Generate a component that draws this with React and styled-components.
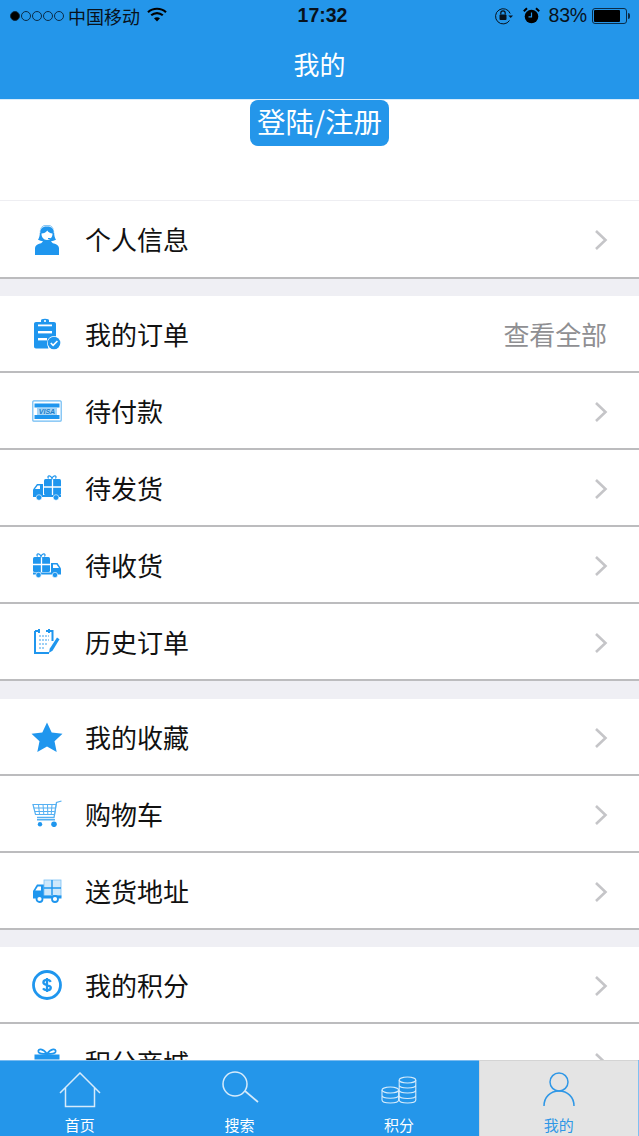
import React from "react";
import styled, { createGlobalStyle } from "styled-components";

const BLUE = "#2496ea";
const ICON = "#1f96ee";

const Global = createGlobalStyle`
  html, body { margin: 0; padding: 0; background: #fff; }
  * { box-sizing: border-box; }
  body { font-family: "Liberation Sans", "Noto Sans CJK SC", sans-serif; }
`;

const Page = styled.div`
  width: 639px; height: 1136px; display: flex; flex-direction: column; overflow: hidden; background: #fff;
`;
const Header = styled.header`
  height: 100px; flex: none; background: ${BLUE}; border-bottom: 1px solid #d8ecfb;
`;
const StatusBar = styled.div`
  height: 31px; display: flex; align-items: center; padding: 0 9px 0 10px; color: #08121c; position: relative;
`;
const Dots = styled.div`
  display: flex; align-items: center; gap: 1px; margin-right: 4px;
`;
const Dot = styled.span`
  width: 10px; height: 10px; border-radius: 50%; border: 1px solid #0a2c48;
  background: ${p => (p.$on ? "#000" : "transparent")};
`;
const Carrier = styled.span`
  font: 18px/1 "Noto Sans CJK SC", sans-serif;
`;
const Time = styled.span`
  position: absolute; left: 6px; right: 0; text-align: center; font: 700 19.5px/31px "Liberation Sans", sans-serif;
`;
const StatusRight = styled.div`
  margin-left: auto; display: flex; align-items: center;
`;
const Percent = styled.span`
  font: 19.5px/1 "Liberation Sans", sans-serif; margin: 0 5px 0 9px; letter-spacing: -.2px;
`;
const Battery = styled.div`
  width: 35px; height: 16px; border: 1px solid #0a2c48; border-radius: 3px; padding: 1px; display: flex;
`;
const BatteryFill = styled.div`
  background: #000; border-radius: 1px; height: 100%;
`;
const BatteryTip = styled.div`
  width: 2px; height: 6px; background: #0a2c48; border-radius: 0 2px 2px 0; margin-left: 1px;
`;
const Spacer = styled.span`
  width: 9px;
`;
const Title = styled.h1`
  margin: 0; height: 67px; display: flex; align-items: center; justify-content: center; padding-bottom: 2px;
  font: 400 26px/1 "Noto Sans CJK SC", sans-serif; color: #fff;
`;
const Hero = styled.section`
  height: 101px; flex: none; display: flex; justify-content: center; align-items: flex-start; background: #fff;
  border-bottom: 1px solid #eeeef2;
`;
const LoginButton = styled.button`
  width: 139px; height: 46px; margin: 0; padding: 0 0 3px; border: 0; border-radius: 8px; background: ${BLUE}; color: #fff;
  font: 400 28.5px/1 "Noto Sans CJK SC", sans-serif; white-space: nowrap;
`;
const Scroll = styled.main`
  flex: 1; min-height: 0; overflow: hidden; background: #efeff4;
`;
const Group = styled.section`
  margin-top: ${p => p.$gap}px;
`;
const Row = styled.div`
  height: ${p => p.$h}px; display: flex; align-items: center; padding: 0 31px 0 29px; background: #fff;
  border-bottom: 2px solid #bcbcbe;
`;
const IconBox = styled.div`
  width: 36px; height: 36px; flex: none; display: flex; align-items: center; justify-content: center;
  svg { display: block; }
`;
const Label = styled.span`
  margin-left: 20px; font: 400 26px/1 "Noto Sans CJK SC", sans-serif; color: #111;
`;
const Right = styled.span`
  margin-left: auto; margin-right: 1px; font: 400 26px/1 "Noto Sans CJK SC", sans-serif; color: #8f8f92; letter-spacing: -.1px;
`;
const Chevron = styled.svg`
  margin: 2px 0 0 auto; display: block;
`;
const TabBar = styled.nav`
  height: 76px; flex: none; display: grid; grid-template-columns: 159.5px 160px 159px 159.5px 1px; background: ${BLUE};
  border-top: 1px solid #79bbf0;
`;
const Tab = styled.div`
  display: flex; flex-direction: column; align-items: center; color: ${p => (p.$active ? "#2f97e6" : "#fff")};
  background: ${p => (p.$active ? "#e4e4e4" : "transparent")};
  border-left: ${p => (p.$active ? "1px solid #d4d4d4" : "0")};
  ${p => p.$active && "border-top: 1px solid #d4d4d4; margin-top: -1px;"}
`;
const TabIcon = styled.div`
  height: 50px; flex: none; display: flex; align-items: flex-end; padding-bottom: ${p => p.$lift}px;
`;
const TabText = styled.span`
  font: 400 15px/1 "Noto Sans CJK SC", sans-serif; margin-top: 6px;
`;
const TabEdge = styled.div`
  background: #7fc0f2;
`;

const Wifi = () => (
  <svg width="20" height="15" viewBox="0 0 20 15" style={{ marginLeft: 7, marginBottom: 2 }}>
    <path d="M1 5.2C6 .6 14 .6 19 5.2" fill="none" stroke="#000" strokeWidth="2.2" />
    <path d="M4.200 8.300c3.400-3 8.200-3 11.600 0" fill="none" stroke="#000" strokeWidth="2.2" />
    <path d="M7 11.200c1.800-1.400 4.200-1.400 6 0L10 14.400z" fill="#000" />
  </svg>
);
const RotationLock = () => (
  <svg width="19" height="18" viewBox="0 0 19 18">
    <path d="M14.500 13.500A7.600 7.600 0 1 1 15.200 6.500" fill="none" stroke="#08121c" strokeWidth="1" />
    <path d="M13.300 8.500h4.700l-2.300 2.600z" fill="#08121c" />
    <rect x="4.500" y="7.500" width="7" height="5.500" rx="1" fill="#08121c" />
    <path d="M5.800 7.500V6a2.200 2.200 0 0 1 4.400 0v1.500" fill="none" stroke="#08121c" strokeWidth="1.200" />
  </svg>
);
const Alarm = () => (
  <svg width="17" height="17" viewBox="0 0 17 17">
    <circle cx="8.500" cy="9.500" r="6.800" fill="#000" />
    <path d="M.8 4.200 4 1.200M16.200 4.200 13 1.200" stroke="#000" strokeWidth="2" />
    <path d="M8.500 5.500v4.300H5.500" fill="none" stroke="#2496ea" strokeWidth="1.200" />
  </svg>
);
const Arrow = () => (
  <Chevron width="14" height="22" viewBox="0 0 14 22">
    <path d="M2 2l9.500 9L2 20" fill="none" stroke="#c5c5c8" strokeWidth="2.6" />
  </Chevron>
);

const Person = () => (
  <svg width="26" height="32" viewBox="0 -1 26 32">
    <path d="M13 1C8 1 5.600 4.500 5.800 8.500c.1 3-.6 5.500-1.800 7.200 1.800.9 3.300 1.200 4.800 1.200-.4 1.400-1 2-2.800 2.600C3 20.500 1.200 21.500 1 24v7h24V24c-.2-2.500-2-3.500-5-4.500-1.800-.6-2.400-1.200-2.800-2.600 1.500 0 3-.3 4.800-1.200-1.200-1.700-1.900-4.200-1.800-7.200C20.400 4.500 18 1 13 1z" fill={ICON} />
    <path d="M7.500 9.500c2.500 0 4.500-1 5.800-3 1 1.800 2.800 2.800 5.200 3 .2 3.500-2 6.500-5.500 6.500s-5.700-3-5.500-6.500z" fill="#fff" />
    <path d="M5.800 9V7.500C6 4 9 2 13 2s7 2 7.200 5.500V9" fill="none" stroke="#fff" strokeWidth=".9" />
    <path d="M14 14.500h2.500c1.500 0 2.500-1 2.800-3" fill="none" stroke={ICON} strokeWidth="1" />
  </svg>
);
const Clipboard = () => (
  <svg width="28" height="32" viewBox="0 0 28 32">
    <path d="M3 4h5V2.500C8 1.500 9 .8 12 .8s4 .7 4 1.700V4h5c1.200 0 2 .8 2 2v13.500a8 8 0 0 0-7.500 11H3c-1.200 0-2-.8-2-2V6c0-1.200.8-2 2-2z" fill={ICON} />
    <circle cx="12" cy="3" r="1.100" fill="#fff" />
    <rect x="5" y="6.500" width="14" height="1.800" fill="#fff" />
    <rect x="5" y="13" width="14" height="2.400" fill="#fff" />
    <rect x="5" y="20" width="9" height="2.400" fill="#fff" />
    <circle cx="21" cy="25" r="7" fill="#fff" />
    <circle cx="21" cy="25" r="6.300" fill={ICON} />
    <path d="M17.800 25l2.300 2.300 4.300-4.300" fill="none" stroke="#fff" strokeWidth="1.600" />
  </svg>
);
const Card = () => (
  <svg width="30" height="22" viewBox="0 0 30 22">
    <rect x=".8" y=".8" width="28.400" height="20.400" rx="1" fill="#fff" stroke="#6dbbf3" strokeWidth="1.200" />
    <rect x="2.500" y="3.500" width="25" height="4" fill={ICON} />
    <rect x="2.500" y="15" width="25" height="4" fill={ICON} />
    <rect x="5" y="8" width="20" height="7" fill="#a6d6f8" />
    <text x="15" y="14.300" textAnchor="middle" fontFamily="Liberation Sans" fontSize="7" fontStyle="italic" fontWeight="700" fill="#1a7dc8">VISA</text>
  </svg>
);
const TruckRight = () => (
  <svg width="30" height="26" viewBox="0 0 30 26">
    <path d="M1 14.500L5 9h6v13H1z" fill={ICON} />
    <path d="M3 14l2.700-3.500H8V14z" fill="#fff" />
    <rect x="12" y="4" width="17" height="16" rx="1.500" fill={ICON} />
    <path d="M20.500 4v16M12 12h17" stroke="#fff" strokeWidth="1.300" />
    <path d="M16.500 3.500c-2-3 2-4 3.500 0 1.500-4 5.500-3 3.500 0" fill="none" stroke={ICON} strokeWidth="1.200" />
    <rect x="1" y="20" width="28" height="2" fill={ICON} />
    <circle cx="7" cy="22.500" r="2.800" fill={ICON} stroke="#fff" strokeWidth=".6" />
    <circle cx="24" cy="22.500" r="2.800" fill={ICON} stroke="#fff" strokeWidth=".6" />
  </svg>
);
const TruckLeft = () => (
  <svg width="30" height="26" viewBox="0 0 30 26">
    <path d="M29 16.500L25.500 11H19v10h10z" fill={ICON} />
    <path d="M27 16l-2.500-3.500H21V16z" fill="#fff" />
    <rect x="1" y="5" width="17" height="15" rx="1.500" fill={ICON} />
    <path d="M9.500 5v15M1 12.500h17" stroke="#fff" strokeWidth="1.300" />
    <path d="M5.500 4.500c-2-3 2-4 3.500 0 1.500-4 5.500-3 3.500 0" fill="none" stroke={ICON} strokeWidth="1.200" />
    <rect x="1" y="20.500" width="28" height="2" fill={ICON} />
    <circle cx="6.500" cy="23" r="2.700" fill={ICON} stroke="#fff" strokeWidth=".6" />
    <circle cx="23" cy="23" r="2.700" fill={ICON} stroke="#fff" strokeWidth=".6" />
  </svg>
);
const Notes = () => (
  <svg width="26" height="26" viewBox="0 0 26 26" style={{ overflow: "visible" }}>
    <path d="M1 2h4M12 2h6.500v10M1 2v22h14" fill="none" stroke={ICON} strokeWidth="2" />
    <rect x="4" y="0" width="2" height="4" fill={ICON} />
    <rect x="14" y="0" width="2" height="4" fill={ICON} />
    <path d="M5 7h10M5 11h10M5 15h8M5 19h6" stroke="#7cc1f4" strokeWidth="1.300" strokeDasharray="2 1" />
    <path d="M23 8.500l2.500 1.800-7 11.500-3.500 2 .7-4z" fill={ICON} />
  </svg>
);
const Star = () => (
  <svg width="32" height="30" viewBox="0 0 32 30">
    <path d="M16 .5l4.700 10 10.800 1.300-8 7.400 2.200 10.800L16 24.600 6.300 30l2.200-10.800-8-7.400 10.800-1.300z" fill={ICON} />
  </svg>
);
const Cart = () => (
  <svg width="30" height="27" viewBox="0 0 30 27">
    <path d="M29.500 1L24.500 2.500 22 17.500H5" fill="none" stroke="#55b0f2" strokeWidth="1.300" />
    <path d="M1 4.500h23l-1.500 10H3.500z" fill="#fff" stroke="#55b0f2" strokeWidth="1.200" />
    <path d="M6.500 4.500l1 10M11 4.500l.8 10M15.500 4.500l.3 10M20 4.500l-.8 10M1.800 8h21.500M2.800 11.500h20" stroke="#55b0f2" strokeWidth="1" />
    <rect x="5" y="19" width="18" height="1.500" fill="#55b0f2" />
    <circle cx="8" cy="24.300" r="2.200" fill={ICON} />
    <circle cx="22" cy="24.300" r="2.800" fill={ICON} />
  </svg>
);
const DeliveryTruck = () => (
  <svg width="30" height="24" viewBox="0 0 30 24">
    <path d="M1 12l4-6.500h7V18H1z" fill={ICON} />
    <path d="M3.300 11.500l2.600-4H9v4z" fill="#fff" />
    <rect x="12" y="1" width="17" height="16" fill="#cfe8fb" stroke="#7cc1f4" strokeWidth=".8" />
    <path d="M20 1v15M12 9h17" stroke={ICON} strokeWidth="1.400" />
    <rect x="1" y="16.500" width="28.500" height="3" fill={ICON} />
    <circle cx="7.500" cy="20" r="3" fill="#fff" stroke={ICON} strokeWidth="1.800" />
    <circle cx="23" cy="20" r="3" fill="#fff" stroke={ICON} strokeWidth="1.800" />
  </svg>
);
const Coin = () => (
  <svg width="30" height="30" viewBox="0 0 30 30">
    <circle cx="15" cy="15" r="13.500" fill="none" stroke={ICON} strokeWidth="2.800" />
    <path d="M18.800 11.800c-.7-1.200-2-1.900-3.800-1.900-2.200 0-3.600 1-3.600 2.500 0 3.500 7.400 1.800 7.400 5.300 0 1.600-1.500 2.500-3.800 2.500-1.900 0-3.200-.6-4-1.800M15 8v14" fill="none" stroke={ICON} strokeWidth="2.300" />
  </svg>
);
const Gift = () => (
  <svg width="26" height="30" viewBox="0 0 26 30">
    <path d="M13 7C9 1 3.500 1.500 4.500 5 5.200 7 9 7 13 7c4 0 7.800 0 8.500-2C22.500 1.500 17 1 13 7z" fill="none" stroke={ICON} strokeWidth="1.800" />
    <rect x="0.500" y="7.500" width="25" height="5" fill={ICON} />
    <rect x="2" y="13.500" width="22" height="14" fill={ICON} />
  </svg>
);

const STROKE = "#d6ebfb";
const HomeIcon = () => (
  <svg width="42" height="36" viewBox="0 0 42 36">
    <path d="M1 21L21 1l20 20M6.500 16v18.500h29V16" fill="none" stroke={STROKE} strokeWidth="1.500" />
  </svg>
);
const SearchIcon = () => (
  <svg width="38" height="34" viewBox="0 0 38 34">
    <circle cx="14" cy="13" r="12" fill="none" stroke={STROKE} strokeWidth="1.500" />
    <path d="M24 20l13 11" stroke={STROKE} strokeWidth="1.700" />
  </svg>
);
const CoinsIcon = () => (
  <svg width="36" height="28" viewBox="0 0 36 28">
    <g fill="none" stroke={STROKE} strokeWidth="1.100">
      <ellipse cx="26.500" cy="4" rx="8.300" ry="3" />
      <path d="M18.200 4v20c0 1.700 3.700 3 8.300 3s8.300-1.300 8.300-3V4M18.200 9c0 1.700 3.700 3 8.300 3s8.300-1.300 8.300-3M18.200 14c0 1.700 3.700 3 8.300 3s8.300-1.300 8.300-3M18.200 19.500c0 1.700 3.700 3 8.300 3s8.300-1.300 8.300-3" />
      <ellipse cx="9.300" cy="14" rx="8.300" ry="3" />
      <path d="M1 14v10c0 1.700 3.700 3 8.300 3s8.300-1.300 8.300-3V14M1 19.200c0 1.700 3.700 3 8.300 3s8.300-1.300 8.300-3" />
    </g>
  </svg>
);
const UserIcon = () => (
  <svg width="32" height="34" viewBox="0 0 32 34">
    <circle cx="16" cy="10" r="9" fill="none" stroke="#2f97e6" strokeWidth="1.500" />
    <path d="M1 34c0-9 6.500-15 15-15s15 6 15 15" fill="none" stroke="#2f97e6" strokeWidth="1.500" />
  </svg>
);

const groups = [
  {
    gap: 0,
    h: 78,
    rows: [{ icon: <Person />, label: "个人信息" }],
  },
  {
    gap: 17,
    h: 77,
    rows: [
      { icon: <Clipboard />, label: "我的订单", right: "查看全部" },
      { icon: <Card />, label: "待付款" },
      { icon: <TruckRight />, label: "待发货" },
      { icon: <TruckLeft />, label: "待收货" },
      { icon: <Notes />, label: "历史订单" },
    ],
  },
  {
    gap: 18,
    h: 77,
    rows: [
      { icon: <Star />, label: "我的收藏" },
      { icon: <Cart />, label: "购物车" },
      { icon: <DeliveryTruck />, label: "送货地址" },
    ],
  },
  {
    gap: 17,
    h: 77,
    rows: [
      { icon: <Coin />, label: "我的积分" },
      { icon: <Gift />, label: "积分商城" },
    ],
  },
];

const tabs = [
  { icon: <HomeIcon />, label: "首页", lift: 3 },
  { icon: <SearchIcon />, label: "搜索", lift: 6 },
  { icon: <CoinsIcon />, label: "积分", lift: 7 },
  { icon: <UserIcon />, label: "我的", lift: 5, active: true },
];

export default function App() {
  return (
    <Page>
      <Global />
      <Header>
        <StatusBar>
          <Dots>
            {[1, 0, 0, 0, 0].map((on, i) => (
              <Dot key={i} $on={!!on} />
            ))}
          </Dots>
          <Carrier>中国移动</Carrier>
          <Wifi />
          <Time>17:32</Time>
          <StatusRight>
            <RotationLock />
            <Spacer />
            <Alarm />
            <Percent>83%</Percent>
            <Battery>
              <BatteryFill style={{ width: "83%" }} />
            </Battery>
            <BatteryTip />
          </StatusRight>
        </StatusBar>
        <Title>我的</Title>
      </Header>
      <Hero>
        <LoginButton>登陆/注册</LoginButton>
      </Hero>
      <Scroll>
        {groups.map((g, i) => (
          <Group key={i} $gap={g.gap}>
            {g.rows.map(r => (
              <Row key={r.label} $h={g.h}>
                <IconBox>{r.icon}</IconBox>
                <Label>{r.label}</Label>
                {r.right ? <Right>{r.right}</Right> : <Arrow />}
              </Row>
            ))}
          </Group>
        ))}
      </Scroll>
      <TabBar>
        {tabs.map(t => (
          <Tab key={t.label} $active={t.active}>
            <TabIcon $lift={t.lift}>{t.icon}</TabIcon>
            <TabText>{t.label}</TabText>
          </Tab>
        ))}
        <TabEdge />
      </TabBar>
    </Page>
  );
}
